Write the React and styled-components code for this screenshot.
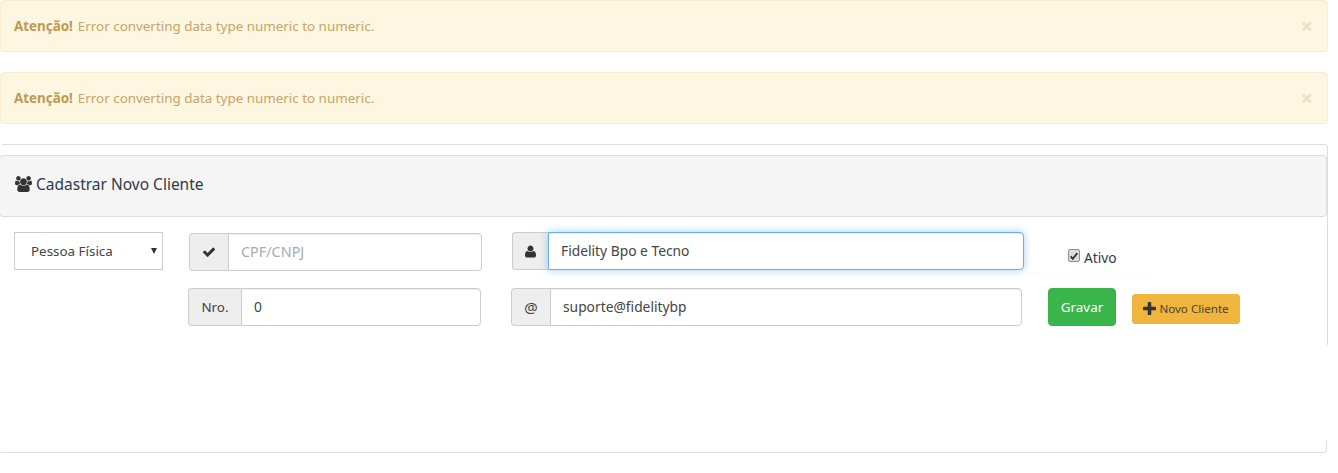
import React from "react";
import styled, { createGlobalStyle } from "styled-components";

const Global = createGlobalStyle`
  html, body { margin: 0; padding: 0; background: #fff; }
  body { width: 1338px; height: 473px; overflow: hidden; font-family: "Noto Sans", "Open Sans", sans-serif; font-size: 14px; color: #333; }
  * { box-sizing: border-box; }
`;

const Page = styled.div`
  width: 1328px;
`;
const Alert = styled.div`
  height: 52px;
  margin-bottom: 20px;
  padding: 0 13px;
  display: flex;
  align-items: center;
  justify-content: space-between;
  background: #fdf6e1;
  border: 1px solid #faebcc;
  border-radius: 4px;
  color: #c9a366;
  font-size: 13.4px;
  strong { font-weight: 700; color: #c09853; margin-right: 5px; }
`;
const Close = styled.span`
  color: #ebe2c0;
  font-weight: 700;
  font-size: 22px;
  line-height: 1;
  margin-right: 1px;
  padding-bottom: 3px;
`;
const Panel = styled.section`
  height: 309px;
  display: flex;
  flex-direction: column;
`;
const PanelTop = styled.div`
  height: 201px;
  padding-top: 10px;
  border: 1px solid #ddd;
  border-bottom: 0;
  border-left-color: transparent;
  border-radius: 4px 4px 0 0;
`;
const PanelHeading = styled.div`
  height: 62px;
  margin-left: -2px;
  padding: 0 0 4px 15px;
  display: flex;
  align-items: center;
  gap: 4px;
  background: #f5f5f5;
  border: 1px solid #ddd;
  border-radius: 4px;
  font-size: 15.5px;
  color: #2f3a4a;
`;
const Form = styled.div`
  display: flex;
  flex-direction: column;
  gap: 18px;
  padding-top: 15px;
`;
const Row = styled.div`
  display: flex;
  align-items: flex-start;
  height: 38px;
`;
const SelectWrap = styled.div`
  position: relative;
  width: 149px;
  height: 38px;
  margin-left: 13px;
  &::after {
    content: "";
    position: absolute;
    right: 6px;
    top: 16px;
    border-left: 3.5px solid transparent;
    border-right: 3.5px solid transparent;
    border-top: 6px solid #333;
    pointer-events: none;
  }
`;
const Select = styled.select`
  appearance: none;
  width: 100%;
  height: 100%;
  padding-left: 16px;
  background: #fff;
  border: 1px solid #ccc;
  border-radius: 0;
  font: inherit;
  font-size: 13.4px;
  color: #444;
  outline: 0;
`;
const Group = styled.div`
  display: flex;
  height: 38px;
  width: ${p => p.$w}px;
  margin-left: ${p => p.$ml}px;
  margin-top: ${p => p.$mt || 0}px;
`;
const Addon = styled.span`
  width: ${p => p.$w}px;
  flex: none;
  display: flex;
  align-items: center;
  justify-content: center;
  background: #eee;
  border: 1px solid #ccc;
  border-right: 0;
  border-radius: 4px 0 0 4px;
  color: #444;
  font-size: ${p => p.$size || 13.4}px;
`;
const Input = styled.input`
  flex: 1;
  min-width: 0;
  height: 100%;
  padding: 0 12px 1px;
  border: 1px solid ${p => (p.$focus ? "#66afe9" : "#ccc")};
  border-radius: 0 4px 4px 0;
  font: inherit;
  font-size: 13.8px;
  color: #444;
  outline: 0;
  box-shadow: ${p => (p.$focus ? "inset 0 1px 1px rgba(0,0,0,.075), 0 0 8px rgba(102,175,233,.6)" : "inset 0 1px 1px rgba(0,0,0,.075)")};
  &::placeholder { color: #aaa; opacity: 1; font-size: 14.4px; }
`;
const CheckCell = styled.div`
  width: 128px;
  height: 42px;
  padding: 17px 0 0 44px;
  border-bottom: 1px solid #fafafa;
`;
const CheckLabel = styled.label`
  display: flex;
  align-items: flex-start;
  font-size: 13.8px;
  line-height: 17px;
  color: #2f3a4a;
`;
const Check = styled.input`
  appearance: none;
  flex: none;
  width: 12px;
  height: 13px;
  margin: 0 4px 0 0;
  border: 1px solid #8f8f8f;
  border-radius: 2px;
  background: #dcdcdc url("data:image/svg+xml,%3Csvg xmlns='http://www.w3.org/2000/svg' viewBox='0 0 12 12'%3E%3Cpath d='M2 6.5l2.500 3L10 2.500' fill='none' stroke='%23333' stroke-width='2.200'/%3E%3C/svg%3E") center / 10px no-repeat;
`;
const SaveButton = styled.button`
  width: 68px;
  height: 38px;
  margin-left: 26px;
  background: #39b54a;
  border: 1px solid #37b24a;
  border-radius: 4px;
  color: #fff;
  font: inherit;
  font-size: 13.4px;
  padding: 0 0 1px;
`;
const NewButton = styled.button`
  width: 108px;
  height: 30px;
  margin-left: 16px;
  margin-top: 6px;
  display: flex;
  align-items: center;
  justify-content: center;
  gap: 3px;
  background: #f0b53d;
  border: 1px solid #eeb43e;
  border-radius: 3px;
  color: #4a4238;
  font: inherit;
  font-size: 11.6px;
  padding: 0 0 2px;
`;
const PanelGap = styled.div`
  flex: 1;
`;
const PanelBottom = styled.div`
  height: 13px;
  margin: 0 1px;
  border-right: 1px solid #ddd;
  border-bottom: 1px solid #ddd;
  border-radius: 0 0 4px 0;
`;

const UsersIcon = () => (
  <svg width="17" height="16" viewBox="0 0 1920 1792" fill="#333">
    <path d="M593 896q-162 5-265 128H194q-82 0-138-40.500T0 865q0-353 124-353 6 0 43.500 21t97.500 42.500T384 597q67 0 133-23-5 37-5 66 0 139 81 256zm1071 637q0 120-73 189.500t-194 69.500H523q-121 0-194-69.500T256 1533q0-53 3.500-103.500t14-109T300 1212t43-97.500 62-81 85.500-53.500T602 960q10 0 43 21.500t73 48 107 48 135 21.500 135-21.500 107-48 73-48 43-21.500q61 0 111.500 20t85.500 53.500 62 81 43 97.500 26.500 108.500 14 109 3.500 103.500zM640 256q0 106-75 181t-181 75-181-75-75-181 75-181T384 0t181 75 75 181zm704 384q0 159-112.500 271.500T960 1024 688.500 911.500 576 640t112.500-271.500T960 256t271.500 112.500T1344 640zm576 225q0 78-56 118.500t-138 40.500h-134q-103-123-265-128 81-117 81-256 0-29-5-66 66 23 133 23 59 0 119-21.500t97.500-42.500 43.500-21q124 0 124 353zm-128-609q0 106-75 181t-181 75-181-75-75-181 75-181 181-75 181 75 75 181z" />
  </svg>
);
const CheckIcon = () => (
  <svg width="14" height="14" viewBox="0 0 1792 1792" fill="#333">
    <path d="M1671 566q0 40-28 68l-724 724-136 136q-28 28-68 28t-68-28l-136-136-362-362q-28-28-28-68t28-68l136-136q28-28 68-28t68 28l294 295 656-657q28-28 68-28t68 28l136 136q28 28 28 68z" />
  </svg>
);
const UserIcon = () => (
  <svg width="11" height="13" viewBox="0 128 1408 1536" fill="#333">
    <path d="M1408 1405q0 120-73 189.500t-194 69.500H267q-121 0-194-69.500T0 1405q0-53 3.500-103.500t14-109T44 1084t43-97.500 62-81 85.500-53.500T346 832q9 0 42 21.500t74.500 48 108 48T704 971t133.500-21.500 108-48 74.500-48 42-21.500q61 0 111.500 20t85.500 53.500 62 81 43 97.500 26.500 108.500 14 109 3.500 103.500zM1088 512q0 159-112.500 271.500T704 896 432.500 783.500 320 512t112.500-271.500T704 128t271.500 112.500T1088 512z" />
  </svg>
);
const PlusIcon = () => (
  <svg width="13" height="13" viewBox="0 0 1408 1408" fill="#333">
    <path d="M1408 608v192q0 40-28 68t-68 28H896v416q0 40-28 68t-68 28H608q-40 0-68-28t-28-68V896H96q-40 0-68-28T0 800V608q0-40 28-68t68-28h416V96q0-40 28-68t68-28h192q40 0 68 28t28 68v416h416q40 0 68 28t28 68z" />
  </svg>
);

const Notice = () => (
  <Alert>
    <span><strong>Atenção!</strong>Error converting data type numeric to numeric.</span>
    <Close>×</Close>
  </Alert>
);

export default function App() {
  return (
    <Page>
      <Global />
      <Notice />
      <Notice />
      <Panel>
        <PanelTop>
          <PanelHeading><UsersIcon />Cadastrar Novo Cliente</PanelHeading>
          <Form>
            <Row>
              <SelectWrap>
                <Select defaultValue="pf">
                  <option value="pf">Pessoa Física</option>
                  <option value="pj">Pessoa Jurídica</option>
                </Select>
              </SelectWrap>
              <Group $w={293} $ml={26} $mt={1}>
                <Addon $w={39}><CheckIcon /></Addon>
                <Input placeholder="CPF/CNPJ" />
              </Group>
              <Group $w={512} $ml={30}>
                <Addon $w={36}><UserIcon /></Addon>
                <Input $focus defaultValue="Fidelity Bpo e Tecno" />
              </Group>
              <CheckCell>
                <CheckLabel><Check type="checkbox" defaultChecked />Ativo</CheckLabel>
              </CheckCell>
            </Row>
            <Row>
              <Group $w={293} $ml={187}>
                <Addon $w={53}>Nro.</Addon>
                <Input defaultValue="0" />
              </Group>
              <Group $w={511} $ml={30}>
                <Addon $w={39} $size={15}>@</Addon>
                <Input defaultValue="suporte@fidelitybp" />
              </Group>
              <SaveButton>Gravar</SaveButton>
              <NewButton><PlusIcon />Novo Cliente</NewButton>
            </Row>
          </Form>
        </PanelTop>
        <PanelGap />
        <PanelBottom />
      </Panel>
    </Page>
  );
}
